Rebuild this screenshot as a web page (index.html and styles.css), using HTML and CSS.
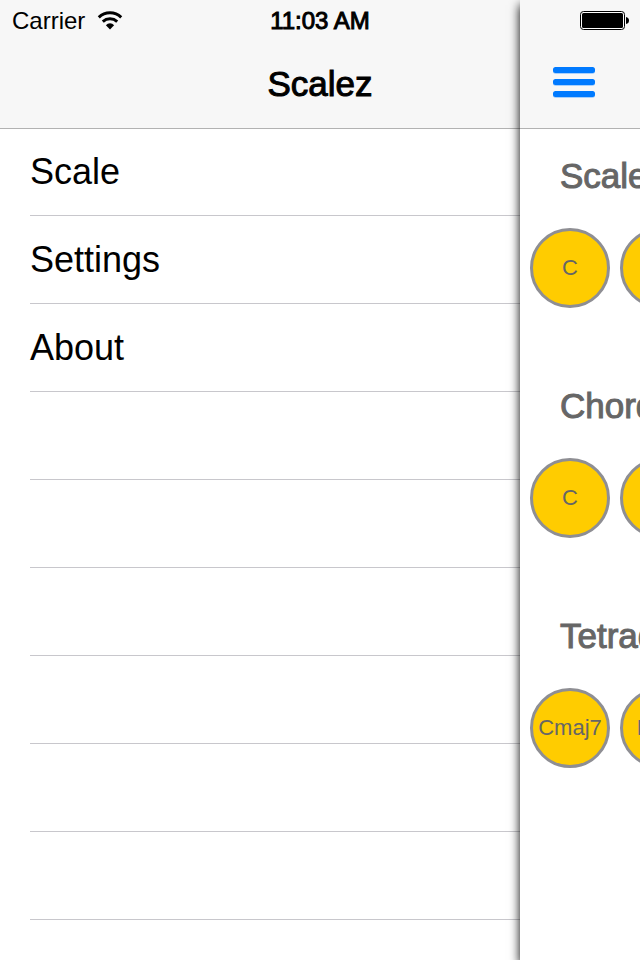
FILE: index.html
```html
<!DOCTYPE html>
<html lang="en">
<head>
<meta charset="utf-8">
<meta name="viewport" content="width=device-width, initial-scale=1">
<title>Scalez</title>
<link rel="stylesheet" href="styles.css">
</head>
<body>
<div class="app">
  <div class="drawer">
    <header class="bar">
      <div class="status">
        <div class="carrier">
          <span>Carrier</span>
          <svg class="wifi" width="26" height="20" viewBox="0 0 26 20" aria-hidden="true">
            <path d="M1.800 6.300A16.300 16.300 0 0 1 24.200 6.300M5.800 10.600A10.800 10.800 0 0 1 20.200 10.600" fill="none" stroke="#000" stroke-width="3"/>
            <path d="M8.900 14.200A5.500 5.500 0 0 1 17.100 14.200L13 18.600Z"/>
          </svg>
        </div>
        <time class="clock">11:03 AM</time>
      </div>
      <h1 class="title">Scalez</h1>
    </header>
    <nav>
      <ul class="menu">
        <li><a href="#scale">Scale</a></li>
        <li><a href="#settings">Settings</a></li>
        <li><a href="#about">About</a></li>
        <li></li>
        <li></li>
        <li></li>
        <li></li>
        <li></li>
        <li></li>
      </ul>
    </nav>
  </div>
  <main class="panel">
    <div class="content">
      <header class="bar">
        <div class="status status-end">
          <svg width="49" height="20" viewBox="0 0 49 20" aria-hidden="true">
            <rect x=".5" y="1.5" width="44" height="18" rx="3" fill="#fff" stroke="#000"/>
            <rect x="2" y="3" width="41" height="15" rx="1.5"/>
            <path d="M46 7q3 .5 3 3.500t-3 3.500z"/>
          </svg>
        </div>
        <button class="toggle" type="button" aria-label="Menu">
          <svg width="44" height="33" viewBox="0 0 44 33" aria-hidden="true">
            <g fill="#a9d0fb"><rect x="1" y="2" width="42" height="6" rx="3"/><rect x="1" y="14" width="42" height="6" rx="3"/><rect x="1" y="26" width="42" height="6" rx="3"/></g>
            <g fill="#007aff"><rect x="1" y="1" width="42" height="6" rx="2.500"/><rect x="1" y="13" width="42" height="6" rx="2.500"/><rect x="1" y="25" width="42" height="6" rx="2.500"/></g>
          </svg>
        </button>
      </header>
      <section class="group">
        <h2>Scale</h2>
        <div class="notes"><button type="button">C</button><button type="button">D</button></div>
      </section>
      <section class="group">
        <h2>Chords</h2>
        <div class="notes"><button type="button">C</button><button type="button">Dm</button></div>
      </section>
      <section class="group">
        <h2>Tetrads</h2>
        <div class="notes"><button type="button">Cmaj7</button><button type="button">Dm7</button></div>
      </section>
    </div>
  </main>
</div>
</body>
</html>
```
FILE: styles.css
```css
* {
  box-sizing: border-box;
}

body {
  margin: 0;
  background: #fff;
  color: #000;
  font-family: "Liberation Sans", Arial, sans-serif;
}

h1, h2, ul {
  margin: 0;
  padding: 0;
}

button {
  padding: 0;
  border: 0;
  background: none;
  font: inherit;
}

/* The panel column lies over the right end of the drawer. */
.app {
  display: grid;
  grid-template-columns: minmax(0, 1fr) 120px;
  grid-template-rows: minmax(0, 1fr);
  height: 100vh;
  overflow: hidden;
}

.drawer {
  grid-area: 1 / 1 / 2 / 3;
  overflow: hidden;
}

.panel {
  grid-area: 1 / 2 / 2 / 3;
  z-index: 1;
  background: #fff;
  box-shadow: 0 5px 10px #000;
}

.content {
  height: 100%;
  overflow: hidden;
}

.bar {
  height: 128px;
  background: #f7f7f7;
  box-shadow: 0 1px #b2b2b2;
}

.status {
  display: grid;
  grid-template-columns: 1fr auto 1fr;
  align-items: center;
  height: 40px;
  padding: 2px 12px 0;
}

.status-end {
  display: flex;
  justify-content: flex-end;
  padding: 0 11px;
}

.carrier {
  display: flex;
  align-items: center;
  gap: 12px;
  font-size: 24px;
}

/* A medium weight, between the family's regular and bold. */
.clock,
.title,
.group h2 {
  font-weight: normal;
  -webkit-text-stroke: 1px currentColor;
}

.clock {
  font-size: 24px;
}

.title {
  font-size: 35px;
  line-height: 88px;
  text-align: center;
}

.toggle {
  display: block;
  margin: 26px 0 0 32px;
}

.toggle svg {
  display: block;
}

.menu {
  list-style: none;
}

.menu li {
  height: 88px;
  margin-left: 30px;
  border-bottom: 1px solid #c8c7cc;
}

.menu a {
  display: block;
  color: inherit;
  font-size: 36px;
  line-height: 88px;
  text-decoration: none;
}

.group {
  height: 230px;
  padding-top: 20px;
  color: #666;
}

.group h2 {
  padding-left: 40px;
  font-size: 35px;
  line-height: 56px;
  white-space: nowrap;
}

.notes {
  display: flex;
  gap: 10px;
  padding: 24px 0 0 10px;
}

.notes button {
  flex: none;
  width: 80px;
  height: 80px;
  border: 3px solid #8e8e93;
  border-radius: 50%;
  background: #fc0;
  color: #666;
  font-size: 22px;
}
```
